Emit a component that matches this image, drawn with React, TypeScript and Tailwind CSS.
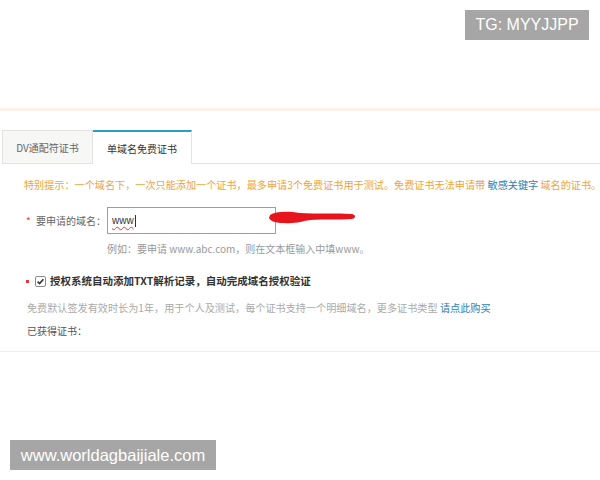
import React from "react";

const cjk = '"Microsoft YaHei", "Noto Sans CJK SC", "Liberation Sans", sans-serif';

export default function App() {
  return (
    <div
      className="relative w-[600px] h-[480px] bg-white overflow-hidden text-[#666]"
      style={{ fontFamily: cjk }}
    >
      {/* peach line */}
      <div className="mt-[108px] h-[3px] bg-[#fcf1ea]" />

      {/* tabs */}
      <div className="mt-[19px] flex pl-[2px] h-[34px]">
        <div className="w-[91px] h-[34px] border border-[#e3e3e3] bg-[#f7f7f6] flex items-center justify-center text-[10px] text-[#666]">
          DV通配符证书
        </div>
        <div className="w-[99px] h-[34px] border-t-2 border-t-[#2a9fc2] border-r border-r-[#e3e3e3] bg-white flex items-center justify-center text-[10px] text-[#333]">
          单域名免费证书
        </div>
        <div className="flex-1 border-b border-[#e3e3e3]" />
      </div>

      {/* notice */}
      <div className="mt-[14px] pl-[24px] text-[10.15px] leading-[14px] text-[#f0a43a] whitespace-nowrap">
        特别提示：一个域名下，一次只能添加一个证书，最多申请3个免费证书用于测试。免费证书无法申请带{" "}
        <span className="text-[#2c7fb8]">敏感关键字</span> 域名的证书。
      </div>

      {/* domain row */}
      <div className="mt-[15px] flex items-center pl-[26px] h-[27px]">
        <span className="text-[#e4393c] text-[10px] w-[10px]">*</span>
        <span className="text-[10px] text-[#666] w-[71px]">要申请的域名：</span>
        <div className="w-[169px] h-[27px] p-px bg-[#7fba5c]">
          <div className="w-full h-full bg-white flex items-center pl-[4px]">
            <span
              className="text-[10px] text-[#333] underline decoration-wavy decoration-[#e4393c] underline-offset-2"
              style={{ fontFamily: '"Liberation Sans", sans-serif' }}
            >
              www
            </span>
            <span className="w-px h-[12px] bg-[#333] ml-px" />
          </div>
        </div>
      </div>

      {/* example */}
      <div className="mt-[8px] pl-[107px] text-[10px] leading-[14px] text-[#999] whitespace-nowrap">
        例如：要申请 www.abc.com，则在文本框输入中填www。
      </div>

      {/* checkbox row */}
      <div className="mt-[18px] flex items-center pl-[26px] h-[14px]">
        <span className="w-[3px] h-[3px] bg-[#e4393c] mr-[6px]" />
        <svg width="11" height="11" viewBox="0 0 11 11" className="mr-[4px]">
          <rect x="0.5" y="0.5" width="10" height="10" rx="1.5" fill="#fff" stroke="#8a8a8a" />
          <path d="M2.6 5.6 L4.6 7.6 L8.4 3.2" fill="none" stroke="#333" strokeWidth="1.6" />
        </svg>
        <span className="text-[10.5px] font-bold text-[#333] whitespace-nowrap">
          授权系统自动添加TXT解析记录，自动完成域名授权验证
        </span>
      </div>

      {/* gray note */}
      <div className="mt-[13px] pl-[27px] text-[10.15px] leading-[14px] text-[#aaa] whitespace-nowrap">
        免费默认签发有效时长为1年，用于个人及测试，每个证书支持一个明细域名，更多证书类型{" "}
        <span className="text-[#2c7fb8]">请点此购买</span>
      </div>

      <div className="mt-[9px] pl-[27px] text-[10px] leading-[14px] text-[#555] whitespace-nowrap">
        已获得证书：
      </div>

      <div className="mt-[13px] h-px bg-[#ececec]" />

      {/* red scribble */}
      <svg className="absolute left-[266px] top-[206px]" width="92" height="22" viewBox="0 0 92 22">
        <path
          d="M4 9 C10 5, 22 5, 34 7 C50 8, 70 7, 86 8 C90 9, 90 12, 86 13 C72 14, 58 13, 44 14 C36 15, 30 18, 18 17 C10 17, 4 15, 3 12 Z"
          fill="#e8141b"
        />
      </svg>

      {/* overlays */}
      <div
        className="absolute left-[465px] top-[10px] w-[124px] h-[30px] bg-[#a6a6a6] text-white text-[16px] flex items-center justify-center"
        style={{ fontFamily: '"Liberation Sans", Arial, sans-serif' }}
      >
        TG: MYYJJPP
      </div>
      <div
        className="absolute left-[10px] top-[440px] w-[206px] h-[30px] bg-[#a6a6a6] text-white text-[16.5px] flex items-center justify-center"
        style={{ fontFamily: '"Liberation Sans", Arial, sans-serif' }}
      >
        www.worldagbaijiale.com
      </div>
    </div>
  );
}
